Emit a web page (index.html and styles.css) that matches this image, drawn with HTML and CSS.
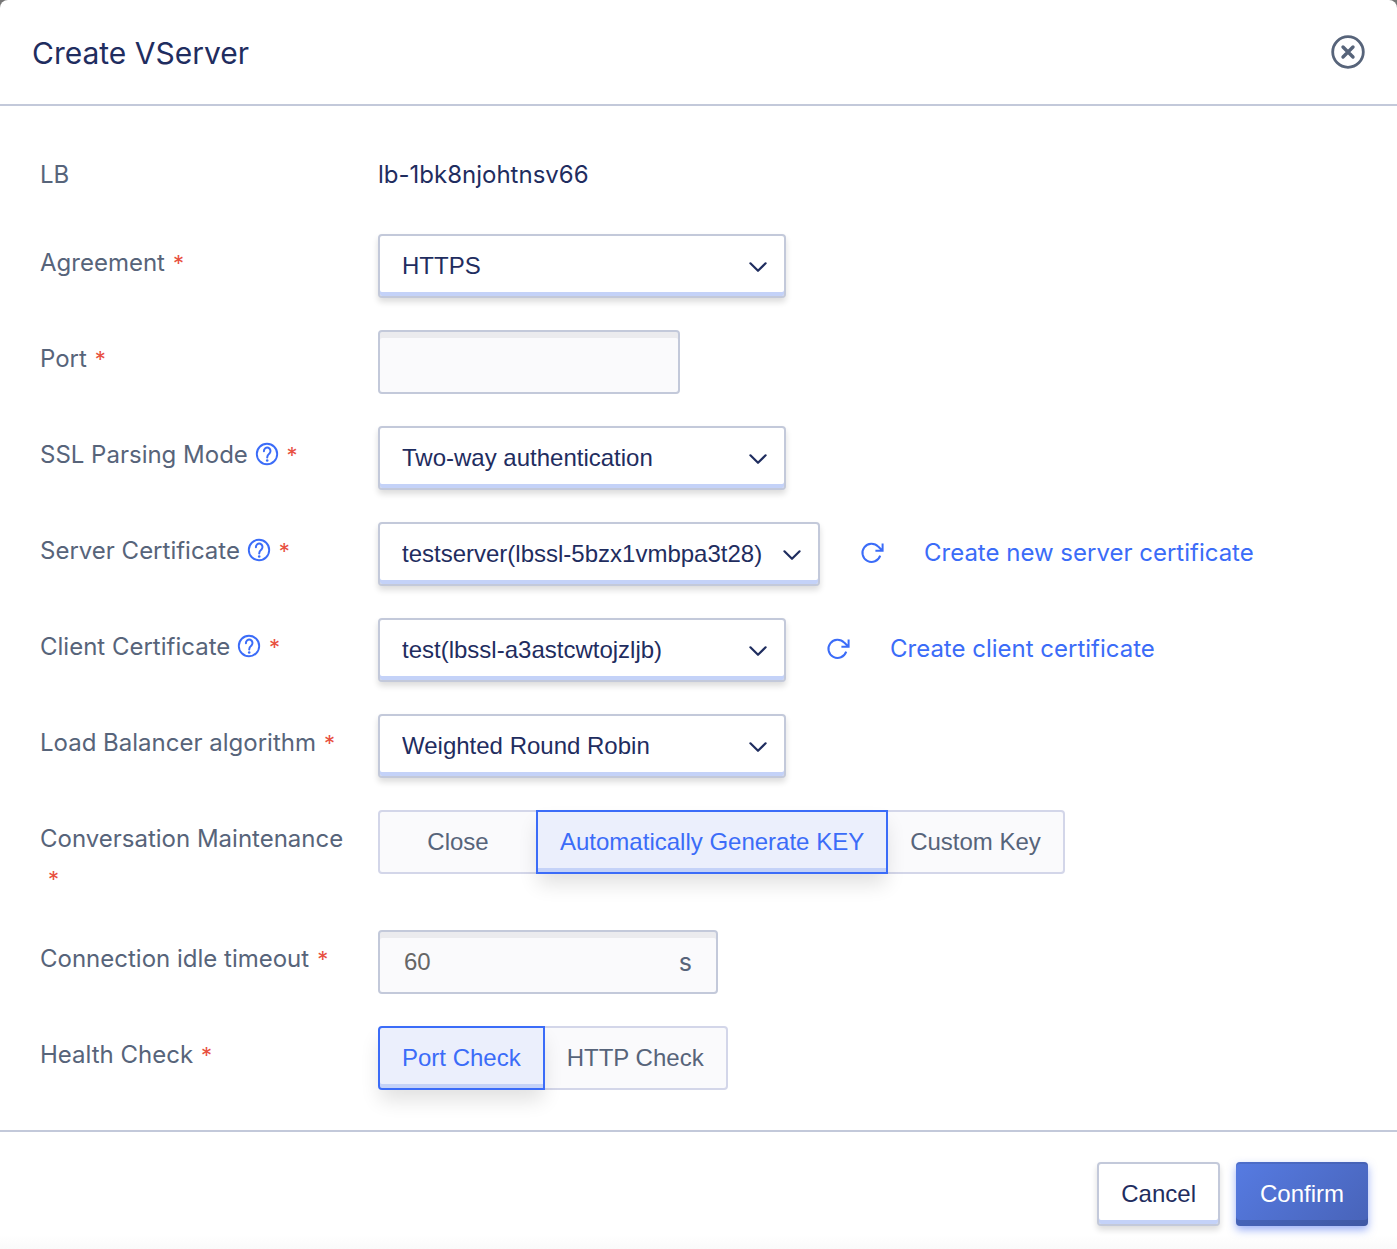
FILE: index.html
```html
<!DOCTYPE html>
<html lang="en">
<head>
<meta charset="utf-8">
<meta name="viewport" content="width=device-width, initial-scale=1">
<title>Create VServer</title>
<link rel="stylesheet" href="styles.css">
</head>
<body>
<svg class="sprite" aria-hidden="true">
  <symbol id="chevron" viewBox="0 0 20 12"><path d="M2.400 2.300l7.600 7.500l7.600-7.500" fill="none" stroke="currentColor" stroke-width="2.200" stroke-linecap="round" stroke-linejoin="round"/></symbol>
  <symbol id="help" viewBox="0 0 24 24"><circle cx="12" cy="12" r="10.200" fill="none" stroke="currentColor" stroke-width="1.900"/><path d="M8.900 9.200a3.300 3.500 0 1 1 5.600 2.300c-1.400 1.200-2.300 1.900-2.300 4" fill="none" stroke="currentColor" stroke-width="2" stroke-linecap="round"/><circle cx="12.200" cy="18.500" r="1.300" fill="currentColor"/></symbol>
  <symbol id="refresh" viewBox="0 0 24 24"><path d="M20.200 14.600A9.100 9.100 0 1 1 18.200 5.600L22 9.200M22.600 2.500v7.200h-7.200" fill="none" stroke="currentColor" stroke-width="2"/></symbol>
</svg>
<form class="dialog">
  <header class="dialog-header">
    <h1 class="dialog-title">Create VServer</h1>
    <button class="icon-button" type="button" aria-label="Close dialog">
      <svg class="close-icon" viewBox="0 0 34 34" aria-hidden="true"><circle cx="17" cy="17" r="15.300" fill="none" stroke="currentColor" stroke-width="2.800"/><path d="M12 12l10 10M22 12L12 22" stroke="currentColor" stroke-width="3.400" stroke-linecap="round"/></svg>
    </button>
  </header>

  <main class="dialog-body">
    <div class="row">
      <span class="label">LB</span>
      <span class="value">lb-1bk8njohtnsv66</span>
    </div>
    <div class="row">
      <label class="label" for="agreement">Agreement<span class="required">*</span></label>
      <div class="field">
        <span class="select"><select id="agreement"><option>HTTPS</option></select><svg class="chevron"><use href="#chevron"/></svg></span>
      </div>
    </div>
    <div class="row">
      <label class="label" for="port">Port<span class="required">*</span></label>
      <div class="field"><span class="input"><input id="port" type="text"></span></div>
    </div>
    <div class="row">
      <label class="label" for="ssl">SSL Parsing Mode <svg class="help"><use href="#help"/></svg><span class="required">*</span></label>
      <div class="field">
        <span class="select"><select id="ssl"><option>Two-way authentication</option></select><svg class="chevron"><use href="#chevron"/></svg></span>
      </div>
    </div>
    <div class="row">
      <label class="label" for="server-cert">Server Certificate <svg class="help"><use href="#help"/></svg><span class="required">*</span></label>
      <div class="field">
        <span class="select select-wide"><select id="server-cert"><option>testserver(lbssl-5bzx1vmbpa3t28)</option></select><svg class="chevron"><use href="#chevron"/></svg></span>
        <button class="icon-button link" type="button" aria-label="Refresh server certificates"><svg class="refresh"><use href="#refresh"/></svg></button>
        <a class="link" href="#">Create new server certificate</a>
      </div>
    </div>
    <div class="row">
      <label class="label" for="client-cert">Client Certificate <svg class="help"><use href="#help"/></svg><span class="required">*</span></label>
      <div class="field">
        <span class="select"><select id="client-cert"><option>test(lbssl-a3astcwtojzljb)</option></select><svg class="chevron"><use href="#chevron"/></svg></span>
        <button class="icon-button link" type="button" aria-label="Refresh client certificates"><svg class="refresh"><use href="#refresh"/></svg></button>
        <a class="link" href="#">Create client certificate</a>
      </div>
    </div>
    <div class="row">
      <label class="label" for="algorithm">Load Balancer algorithm<span class="required">*</span></label>
      <div class="field">
        <span class="select"><select id="algorithm"><option>Weighted Round Robin</option></select><svg class="chevron"><use href="#chevron"/></svg></span>
      </div>
    </div>
    <div class="row">
      <span class="label" id="conversation">Conversation Maintenance<span class="required">*</span></span>
      <div class="field">
        <div class="segments" role="radiogroup" aria-labelledby="conversation">
          <label class="segment"><input type="radio" name="conversation">Close</label>
          <label class="segment"><input type="radio" name="conversation" checked>Automatically Generate KEY</label>
          <label class="segment"><input type="radio" name="conversation">Custom Key</label>
        </div>
      </div>
    </div>
    <div class="row">
      <label class="label" for="timeout">Connection idle timeout<span class="required">*</span></label>
      <div class="field"><span class="input input-unit"><input id="timeout" type="text" value="60"><span class="unit">s</span></span></div>
    </div>
    <div class="row">
      <span class="label" id="health">Health Check<span class="required">*</span></span>
      <div class="field">
        <div class="segments" role="radiogroup" aria-labelledby="health">
          <label class="segment"><input type="radio" name="health" checked>Port Check</label>
          <label class="segment"><input type="radio" name="health">HTTP Check</label>
        </div>
      </div>
    </div>
  </main>

  <footer class="dialog-footer">
    <button class="button" type="button">Cancel</button>
    <button class="button button-primary" type="submit">Confirm</button>
  </footer>
</form>
</body>
</html>
```
FILE: styles.css
```css
:root {
  --navy: #1f2d5f;
  --slate: #57647a;
  --blue: #3b6cf8;
  --line: #c3c9da;
  --stripe: #c4d2f8;
  --ui: "Liberation Sans", Arial, sans-serif;
}

* {
  box-sizing: border-box;
}

body {
  margin: 0;
  background: #777;
  color: var(--slate);
  font: 24px/40px Inter, sans-serif;
}

.sprite {
  display: none;
}

.dialog {
  display: flex;
  flex-direction: column;
  min-height: 100vh;
  background: #fff;
  border-radius: 8px 8px 0 0;
}

.dialog-header {
  display: flex;
  align-items: center;
  justify-content: space-between;
  padding: 31px 32px;
  border-bottom: 2px solid var(--line);
}

.dialog-title {
  margin: 0;
  padding-top: 2px;
  color: var(--navy);
  font-size: 30px;
  font-weight: 400;
  line-height: 40px;
}

.icon-button {
  display: flex;
  padding: 0;
  border: 0;
  background: none;
  color: var(--slate);
}

.close-icon {
  width: 34px;
  height: 34px;
}

.dialog-body {
  display: flex;
  flex-direction: column;
  gap: 24px;
  padding: 40px 40px 32px;
}

.row {
  display: grid;
  grid-template-columns: 338px 1fr;
  align-items: start;
  min-height: 64px;
}

.label {
  padding: 9px 32px 7px 0;
}

.value {
  padding: 9px 0 7px;
  color: var(--navy);
}

.required {
  display: inline-block;
  margin-left: 8px;
  color: #e8503f;
  font-size: 22px;
  line-height: 24px;
}

.help {
  width: 24px;
  height: 24px;
  color: var(--blue);
  vertical-align: -3px;
}

.field {
  display: flex;
  flex-wrap: wrap;
  align-items: center;
  gap: 0 40px;
  padding-bottom: 8px;
}

.select {
  display: grid;
  align-items: center;
  width: 408px;
}

.select-wide {
  width: 442px;
}

.select select,
.chevron {
  grid-area: 1 / 1;
}

.select select {
  appearance: none;
  width: 100%;
  height: 64px;
  padding: 0 52px 0 22px;
  border: 2px solid var(--line);
  border-radius: 4px;
  background: #fff;
  box-shadow: inset 0 -4px var(--stripe), 0 4px 6px rgba(0, 0, 0, 0.14);
  color: var(--navy);
  font: 24px/32px var(--ui);
}

.chevron {
  justify-self: end;
  width: 20px;
  height: 12px;
  margin: 2px 18px 0 0;
  color: var(--navy);
  pointer-events: none;
}

.input {
  display: flex;
  align-items: center;
  width: 302px;
  height: 64px;
  padding: 0 24px;
  border: 2px solid var(--line);
  border-radius: 4px;
  background: #fafafc;
  box-shadow: inset 0 6px #ebebee;
}

.input-unit {
  width: 340px;
}

.input input {
  flex: 1;
  min-width: 0;
  padding: 0;
  border: 0;
  outline: 0;
  background: none;
  color: #666;
  font: 24px/32px var(--ui);
}

.unit {
  font-size: 25px;
}

.link {
  padding-bottom: 2px;
  color: var(--blue);
  text-decoration: none;
}

.refresh {
  width: 24px;
  height: 24px;
}

.segments {
  display: flex;
}

.segment {
  position: relative;
  height: 64px;
  padding: 0 22px;
  border: 2px solid #d3d6e9;
  background: #fafafc;
  font: 24px/60px var(--ui);
  text-align: center;
  white-space: nowrap;
}

.segment:first-child {
  min-width: 160px;
  border-radius: 4px 0 0 4px;
}

.segment:last-child {
  border-radius: 0 4px 4px 0;
}

.segment + .segment {
  margin-left: -2px;
}

.segment:has(:checked) {
  z-index: 1;
  border-color: var(--blue);
  background: #ebeffc;
  box-shadow: inset 0 -4px var(--stripe), 0 12px 20px -2px rgba(0, 0, 0, 0.12);
  color: var(--blue);
}

.segment input {
  position: absolute;
  inset: 0;
  margin: 0;
  opacity: 0;
}

.dialog-footer {
  display: flex;
  flex: 1;
  align-items: start;
  justify-content: flex-end;
  gap: 16px;
  padding: 30px 29px 16px;
  border-top: 2px solid var(--line);
  background: linear-gradient(to top, #fafafa, #fff 14px);
}

.button {
  height: 64px;
  padding: 0 22px;
  border: 2px solid var(--line);
  border-radius: 4px;
  background: #fff;
  box-shadow: inset 0 -4px var(--stripe), 0 4px 6px rgba(0, 0, 0, 0.14);
  color: var(--navy);
  font: 24px/32px var(--ui);
}

.button-primary {
  padding: 0 24px;
  border: 0;
  background: linear-gradient(135deg, #567be2, #4863b8);
  box-shadow: inset 0 2px rgba(50, 70, 130, 0.25), inset 0 -6px rgba(50, 70, 130, 0.35), 0 4px 8px rgba(59, 100, 240, 0.5);
  color: #fff;
}
```
